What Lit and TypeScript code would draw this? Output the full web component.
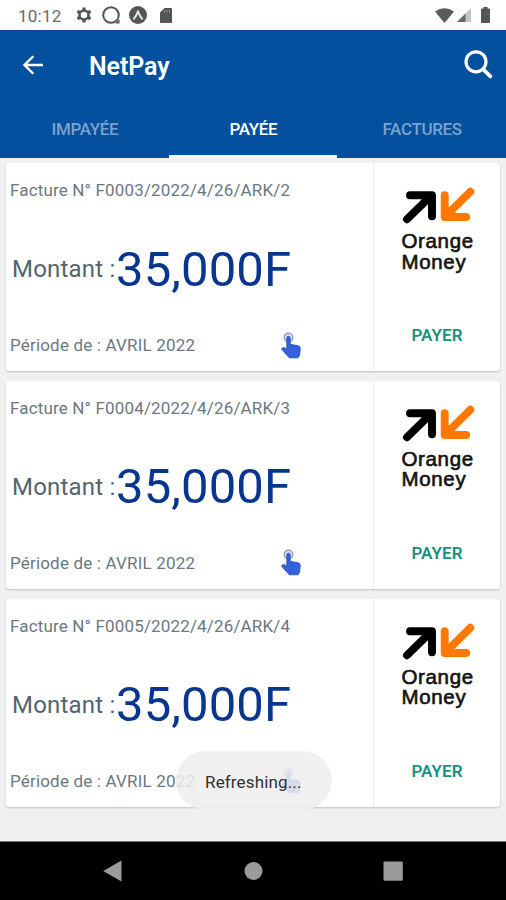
import { LitElement, html, css } from "lit";
import { customElement, property } from "lit/decorators.js";

@customElement("status-bar")
class StatusBar extends LitElement {
  static styles = css`
    :host { display: flex; height: 30px; box-sizing: border-box; padding: 0 16px 0 18px; align-items: center; background: #fff; color: #6a6a6a; }
    .time { font: 400 17px/30px Roboto, sans-serif; letter-spacing: 0.25px; width: 58px; padding-top: 1px; }
    svg { display: block; flex: none; }
    .gear { width: 16px; height: 16px; }
    .ring { width: 20px; height: 20px; margin-left: 9px; }
    .badge { width: 18px; height: 18px; margin-left: 8px; }
    .sd { width: 12px; height: 15px; margin-left: 13px; }
    .wifi { width: 19px; height: 15px; margin-left: auto; }
    .cell { width: 14px; height: 14px; margin-left: 3px; }
    .battery { width: 9px; height: 16px; margin-left: 10px; }
  `;
  render() {
    return html`
      <span class="time">10:12</span>
      <svg class="gear" viewBox="0 0 16 16"><circle cx="8" cy="8" r="4.500" fill="none" stroke="#555" stroke-width="2.500"/><path d="M8 .5v2.700M8 12.800v2.700M1.500 4.250l2.340 1.350M12.160 10.400l2.340 1.350M1.500 11.750l2.340-1.350M12.160 5.600l2.340-1.350" stroke="#555" stroke-width="3.200"/></svg>
      <svg class="ring" viewBox="0 0 20 20"><circle cx="10" cy="10" r="7.800" fill="none" stroke="#555" stroke-width="2"/><path d="M14 18.500h4.500V14z" fill="#555"/></svg>
      <svg class="badge" viewBox="0 0 18 18"><circle cx="9" cy="9" r="9" fill="#555"/><path d="M4.900 12.800Q7 10.500 9 5.300q2 5.200 4.100 7.500" fill="none" stroke="#e8e8e8" stroke-width="2" stroke-linecap="round" stroke-linejoin="round"/></svg>
      <svg class="sd" viewBox="0 0 12 15"><path d="M4.500 0H11q1 0 1 1v13q0 1-1 1H1q-1 0-1-1V4.500z" fill="#555"/><path d="M4.500 2v2.500M7 2v2.500M9.500 2v2.500" stroke="#999"/></svg>
      <svg class="wifi" viewBox="0 0 19 15"><path d="M0 3.500Q9.500-3 19 3.500L9.500 15z" fill="#5a5a5a"/></svg>
      <svg class="cell" viewBox="0 0 14 14"><path d="M14 0v14H0z" fill="#c4c4c4"/><path d="M8.500 5.500V14H0z" fill="#666"/></svg>
      <svg class="battery" viewBox="0 0 9 16"><path d="M2.500 0h4v1.500H8q1 0 1 1V15q0 1-1 1H1q-1 0-1-1V2.500q0-1 1-1h1.500z" fill="#555"/></svg>
    `;
  }
}

@customElement("app-header")
class AppHeader extends LitElement {
  static styles = css`
    :host { display: flex; flex-direction: column; height: 128px; box-sizing: border-box; background: #02509e; border-top: 1px solid #113f91; font-family: Roboto, sans-serif; }
    .bar { display: flex; align-items: center; height: 67px; padding: 0 13px 0 23px; }
    .back { width: 20px; height: 20px; }
    .title { margin: 3px 0 0 46px; font-size: 25px; font-weight: 600; color: #fff; flex: 1; letter-spacing: -0.1px; }
    .search { width: 29px; height: 29px; }
    .tabs { display: grid; grid-template-columns: repeat(3, 1fr); flex: 1; }
    .tab { display: flex; align-items: center; justify-content: center; padding: 4px 0 0 1px; border-bottom: 3px solid transparent; color: #7ba2cf; font-size: 17px; font-weight: 500; letter-spacing: -0.35px; }
    .active { color: #fff; border-bottom-color: #f6f8fc; }
  `;
  render() {
    return html`
      <div class="bar">
        <svg class="back" viewBox="0 0 20 20" fill="none" stroke="#fff" stroke-width="2.300"><path d="M20 10H2M10.300 1.200 1.500 10l8.800 8.800"/></svg>
        <span class="title">NetPay</span>
        <svg class="search" viewBox="0 0 29 29" fill="none" stroke="#fff"><circle cx="12" cy="11.800" r="10" stroke-width="3.200"/><path d="m19.300 19.300 7 7" stroke-width="3.800" stroke-linecap="round"/></svg>
      </div>
      <div class="tabs">
        <div class="tab">IMPAYÉE</div>
        <div class="tab active">PAYÉE</div>
        <div class="tab">FACTURES</div>
      </div>
    `;
  }
}

@customElement("invoice-card")
class InvoiceCard extends LitElement {
  @property() number = "";
  static styles = css`
    :host { display: flex; height: 208px; background: #fff; border-radius: 3px; box-shadow: 0 1px 2px rgba(0,0,0,.2); font-family: Roboto, sans-serif; color: #6c777f; }
    .details { width: 367px; display: flex; flex-direction: column; border-right: 1px solid #ebebeb; }
    .ref { font-size: 17px; line-height: 20px; padding: 17px 0 0 4px; white-space: nowrap; letter-spacing: 0.16px; }
    .amount { display: flex; align-items: center; height: 60px; margin-top: 39px; padding-left: 6px; white-space: nowrap; }
    .label { font-size: 24px; color: #53646f; width: 104px; letter-spacing: 0.2px; }
    .value { font-size: 49px; line-height: 60px; color: #08368f; padding-top: 1px; letter-spacing: 0.1px; }
    .period { display: flex; align-items: center; margin-top: 32px; height: 28px; padding-left: 4px; font-size: 17px; letter-spacing: 0.18px; }
    .period span { width: 271px; }
    .hand { width: 20px; height: 27px; }
    .pay { flex: 1; display: flex; flex-direction: column; align-items: center; }
    .arrows { width: 73px; height: 37px; margin: 24px 0 0 3px; }
    .brand { width: 74px; margin: 7px 0 0 3px; font: 400 20.5px/20.5px "Liberation Sans", sans-serif; -webkit-text-stroke: .65px #141414; color: #141414; letter-spacing: 0.65px; }
    .action { margin-top: 53px; font-size: 17px; line-height: 20px; font-weight: 600; color: #18917d; letter-spacing: 0.1px; }
  `;
  render() {
    return html`
      <div class="details">
        <div class="ref">Facture N° ${this.number}</div>
        <div class="amount"><span class="label">Montant :</span><span class="value">35,000F</span></div>
        <div class="period"><span>Période de : AVRIL 2022</span>
          <svg class="hand" viewBox="0 0 20 27"><circle cx="7.500" cy="5.500" r="4.300" fill="#d9dff5" stroke="#8792b8" stroke-width="1.200"/><path d="M5.800 6q0-1.800 1.700-1.800T9.200 6v6.300l8 1.500q2.200.5 2.100 2.700l-.7 6.500-1.500 2.800H8.300L5.500 22.700.9 17.500q-.6-1 .5-1.600l1.800-.4 2.600 1.800z" fill="#3561dc" stroke="#244bb4" stroke-width=".8"/></svg>
        </div>
      </div>
      <div class="pay">
        <svg class="arrows" viewBox="0 0 73 37" fill="none" stroke-width="7.900" stroke-linecap="round" stroke-linejoin="round">
          <g stroke="#000"><path d="M8 8.200h22v21M29 8.700 5 32.300"/><path d="M30 8v13L17 8z" fill="#000" stroke-width="1"/></g>
          <g stroke="#ff7900"><path d="M42.700 8.200v21.800h21.500M43.500 29.200 68.300 4.700"/><path d="M42.500 30V17l13 13z" fill="#ff7900" stroke-width="1"/></g>
        </svg>
        <div class="brand">Orange<br>Money</div>
        <div class="action">PAYER</div>
      </div>
    `;
  }
}

@customElement("nav-bar")
class NavBar extends LitElement {
  static styles = css`
    :host { display: grid; grid-template-columns: 140px 1fr 140px; padding: 0 43px; height: 59px; box-sizing: border-box; border-top: 1px solid #777; background: #000; align-items: center; justify-items: center; }
    svg { width: 20px; height: 22px; fill: #9b9b9b; }
  `;
  render() {
    return html`
      <svg viewBox="0 0 20 22"><path d="M18.500 .5v21L.2 11z"/></svg>
      <svg viewBox="0 0 20 22"><circle cx="10.500" cy="11" r="9"/></svg>
      <svg viewBox="0 0 20 22"><rect x=".5" y="1.500" width="19.300" height="19.300" rx="1.200"/></svg>
    `;
  }
}

@customElement("app-root")
class AppRoot extends LitElement {
  static styles = css`
    :host { display: flex; flex-direction: column; height: 900px; width: 506px; position: relative; overflow: hidden; background: #f0f0f0; }
    .list { flex: 1; min-height: 0; display: flex; flex-direction: column; gap: 9.800px; padding: 5px 6px 0; }
    .toast { position: absolute; left: 176px; top: 751px; width: 156px; height: 59px; box-sizing: border-box; padding: 3px 0 0 29px; border-radius: 30px; background: rgba(238,238,238,.87); font: 400 17px/57px Roboto, sans-serif; color: #303030; letter-spacing: 0.15px; }
  `;
  render() {
    return html`
      <status-bar></status-bar>
      <app-header></app-header>
      <div class="list">
        ${["F0003/2022/4/26/ARK/2", "F0004/2022/4/26/ARK/3", "F0005/2022/4/26/ARK/4"].map(
          (n) => html`<invoice-card .number=${n}></invoice-card>`
        )}
      </div>
      <nav-bar></nav-bar>
      <div class="toast">Refreshing...</div>
    `;
  }
}
